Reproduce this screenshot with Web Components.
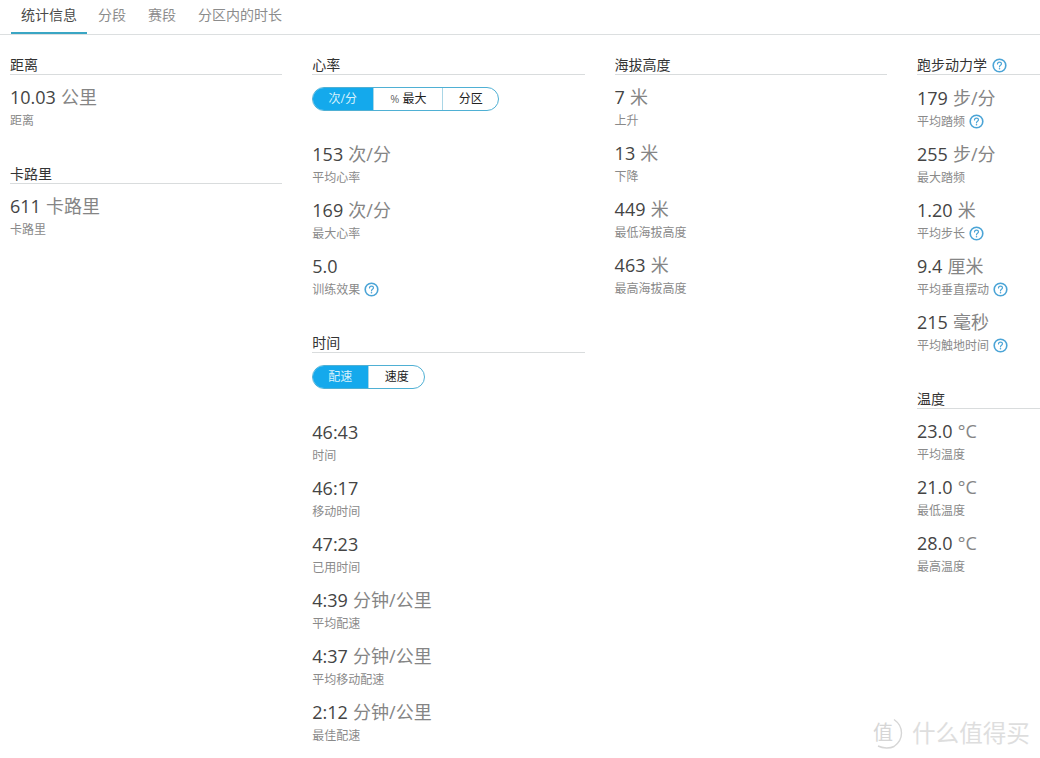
<!DOCTYPE html>
<html lang="zh">
<head>
<meta charset="utf-8">
<title>统计信息</title>
<style>
html,body{margin:0;padding:0;background:#fff;height:758px;overflow:hidden}
body{font-family:"Open Sans","Noto Sans CJK SC",sans-serif;color:#444}
</style>
</head>
<body>
<stats-page>
  <stat-tabs>
    <tab-item active>统计信息</tab-item><tab-item>分段</tab-item><tab-item>赛段</tab-item><tab-item>分区内的时长</tab-item>
  </stat-tabs>
  <stat-grid>
    <stat-column>
      <stat-section heading="距离">
        <stat-item value="10.03" unit="公里" label="距离"></stat-item>
      </stat-section>
      <stat-section heading="卡路里">
        <stat-item value="611" unit="卡路里" label="卡路里"></stat-item>
      </stat-section>
    </stat-column>
    <stat-column>
      <stat-section heading="心率">
        <seg-toggle slot="toggle" options="次/分:61,% 最大:69,分区:56"></seg-toggle>
        <stat-item value="153" unit="次/分" label="平均心率"></stat-item>
        <stat-item value="169" unit="次/分" label="最大心率"></stat-item>
        <stat-item value="5.0" label="训练效果" help></stat-item>
      </stat-section>
      <stat-section heading="时间">
        <seg-toggle slot="toggle" options="配速:56,速度:56"></seg-toggle>
        <stat-item value="46:43" label="时间"></stat-item>
        <stat-item value="46:17" label="移动时间"></stat-item>
        <stat-item value="47:23" label="已用时间"></stat-item>
        <stat-item value="4:39" unit="分钟/公里" label="平均配速"></stat-item>
        <stat-item value="4:37" unit="分钟/公里" label="平均移动配速"></stat-item>
        <stat-item value="2:12" unit="分钟/公里" label="最佳配速"></stat-item>
      </stat-section>
    </stat-column>
    <stat-column>
      <stat-section heading="海拔高度">
        <stat-item value="7" unit="米" label="上升"></stat-item>
        <stat-item value="13" unit="米" label="下降"></stat-item>
        <stat-item value="449" unit="米" label="最低海拔高度"></stat-item>
        <stat-item value="463" unit="米" label="最高海拔高度"></stat-item>
      </stat-section>
    </stat-column>
    <stat-column>
      <stat-section heading="跑步动力学" help nudge>
        <stat-item value="179" unit="步/分" label="平均踏频" help></stat-item>
        <stat-item value="255" unit="步/分" label="最大踏频"></stat-item>
        <stat-item value="1.20" unit="米" label="平均步长" help></stat-item>
        <stat-item value="9.4" unit="厘米" label="平均垂直摆动" help></stat-item>
        <stat-item value="215" unit="毫秒" label="平均触地时间" help></stat-item>
      </stat-section>
      <stat-section heading="温度">
        <stat-item value="23.0" unit="°C" label="平均温度"></stat-item>
        <stat-item value="21.0" unit="°C" label="最低温度"></stat-item>
        <stat-item value="28.0" unit="°C" label="最高温度"></stat-item>
      </stat-section>
    </stat-column>
  </stat-grid>
  <water-mark></water-mark>
</stats-page>
<script>
function def(name, css, html){
  customElements.define(name, class extends HTMLElement{
    connectedCallback(){
      if(this.shadowRoot) return;
      const r=this.attachShadow({mode:'open'});
      r.innerHTML='<style>'+css+'</style>'+(typeof html==='function'?html(this):html);
    }
  });
}
const esc=s=>String(s==null?'':s).replace(/&/g,'&amp;').replace(/</g,'&lt;');
def('stats-page',':host{display:block;position:relative;width:1040px;height:758px;overflow:hidden}','<slot></slot>');
def('stat-tabs',':host{display:flex;height:34px;padding-left:11px;border-bottom:1px solid #dcdfe0;box-sizing:content-box}','<slot></slot>');
def('tab-item',`:host{display:block;height:34px;padding:0 10px;margin-right:2px;box-sizing:border-box;font-size:14px;line-height:30px;color:#8c8c8c;white-space:nowrap}
:host([active]){color:#4a4a4a;border-bottom:2px solid #3aa6c4;margin-right:1px}`,'<slot></slot>');
def('stat-grid',':host{display:grid;grid-template-columns:repeat(4,272.3px);column-gap:30px;padding:20px 0 0 10px}','<slot></slot>');
def('stat-column',':host{display:block;min-width:0}','<slot></slot>');
def('help-icon',':host{display:inline-block;width:15px;height:15px;line-height:0;position:relative;top:-1px}:host([low]){top:1px}svg{display:block}',
 `<svg width="15" height="15" viewBox="0 0 15 15" fill="none"><circle cx="7.5" cy="7.5" r="6.3" stroke="#4ba4d6" stroke-width="1.6"/><path d="M5.5 6c0-1.2.9-1.9 2-1.9s2 .7 2 1.7c0 1.5-2 1.5-2 3" stroke="#4ba4d6" stroke-width="1.2" stroke-linecap="round"/><circle cx="7.5" cy="10.8" r=".8" fill="#4ba4d6"/></svg>`);
def('stat-section',`:host{display:block;margin-bottom:23px}
.h{display:flex;align-items:center;gap:5px;height:19px;border-bottom:1px solid #d9dcdd;font-size:14px;line-height:19px;color:#333;white-space:nowrap}
.items{display:block;padding-top:10px}
:host([nudge]) .items{padding-top:11px}
.tg{display:block}
::slotted(seg-toggle){margin:12px 0 21px}`,
 el=>`<div class="h"><span>${esc(el.getAttribute('heading'))}</span>${el.hasAttribute('help')?'<help-icon low></help-icon>':''}</div><slot class="tg" name="toggle"></slot><div class="items"><slot></slot></div>`);
def('stat-item',`:host{display:block;height:56px;white-space:nowrap}
.v{display:block;height:28px;overflow:visible;font-size:18px;line-height:24px;color:#444}
.u{color:#858585;margin-left:.5px}
.l{display:flex;align-items:center;gap:4px;height:16px;font-size:12px;line-height:16px;color:#8a8a8a}`,
 el=>{const u=el.getAttribute('unit');return `<div class="v">${esc(el.getAttribute('value'))}${u?' <span class="u">'+esc(u)+'</span>':''}</div><div class="l"><span>${esc(el.getAttribute('label'))}</span>${el.hasAttribute('help')?'<help-icon></help-icon>':''}</div>`});
def('seg-toggle',`:host{display:flex;width:max-content;height:24px;box-sizing:border-box;border:1px solid #4fb0d4;border-radius:12px;overflow:hidden;font-size:12px;line-height:22px;color:#222}
span{display:block;text-align:center;box-sizing:border-box;border-left:1px solid #a9d6e6;white-space:nowrap}
span:first-of-type{border-left:0;background:#14a9ec;color:#d8f1fc;margin:-1px 0 -1px -1px;line-height:24px}
span i{font-style:normal;font-size:11px;color:#666}`,
 el=>el.getAttribute('options').split(',').map(o=>{const [t,w]=o.split(':');const txt=esc(t).replace('% ','<i>%</i> ');return `<span style="width:${w}px">${txt}</span>`}).join(''));
def('water-mark',`:host{position:absolute;left:873px;top:716px;display:flex;align-items:center;gap:9px;height:34px;color:#dedede;white-space:nowrap}
.c{position:relative;width:30px;height:32px;font-size:20px;line-height:32px;box-sizing:border-box;color:#d6d6d6}
svg{position:absolute;left:0;top:0}
.t{font-size:23.6px;line-height:34px}`,
 `<span class="c">值<svg width="30" height="32" viewBox="0 0 30 32" fill="none"><path d="M21 2.5C26 6 28.5 10.5 28.5 16S26 26 21 29.5C17 31.5 10 31.5 5 29" stroke="#d6d6d6" stroke-width="1.4"/></svg></span><span class="t">什么值得买</span>`);
</script>
</body>
</html>
